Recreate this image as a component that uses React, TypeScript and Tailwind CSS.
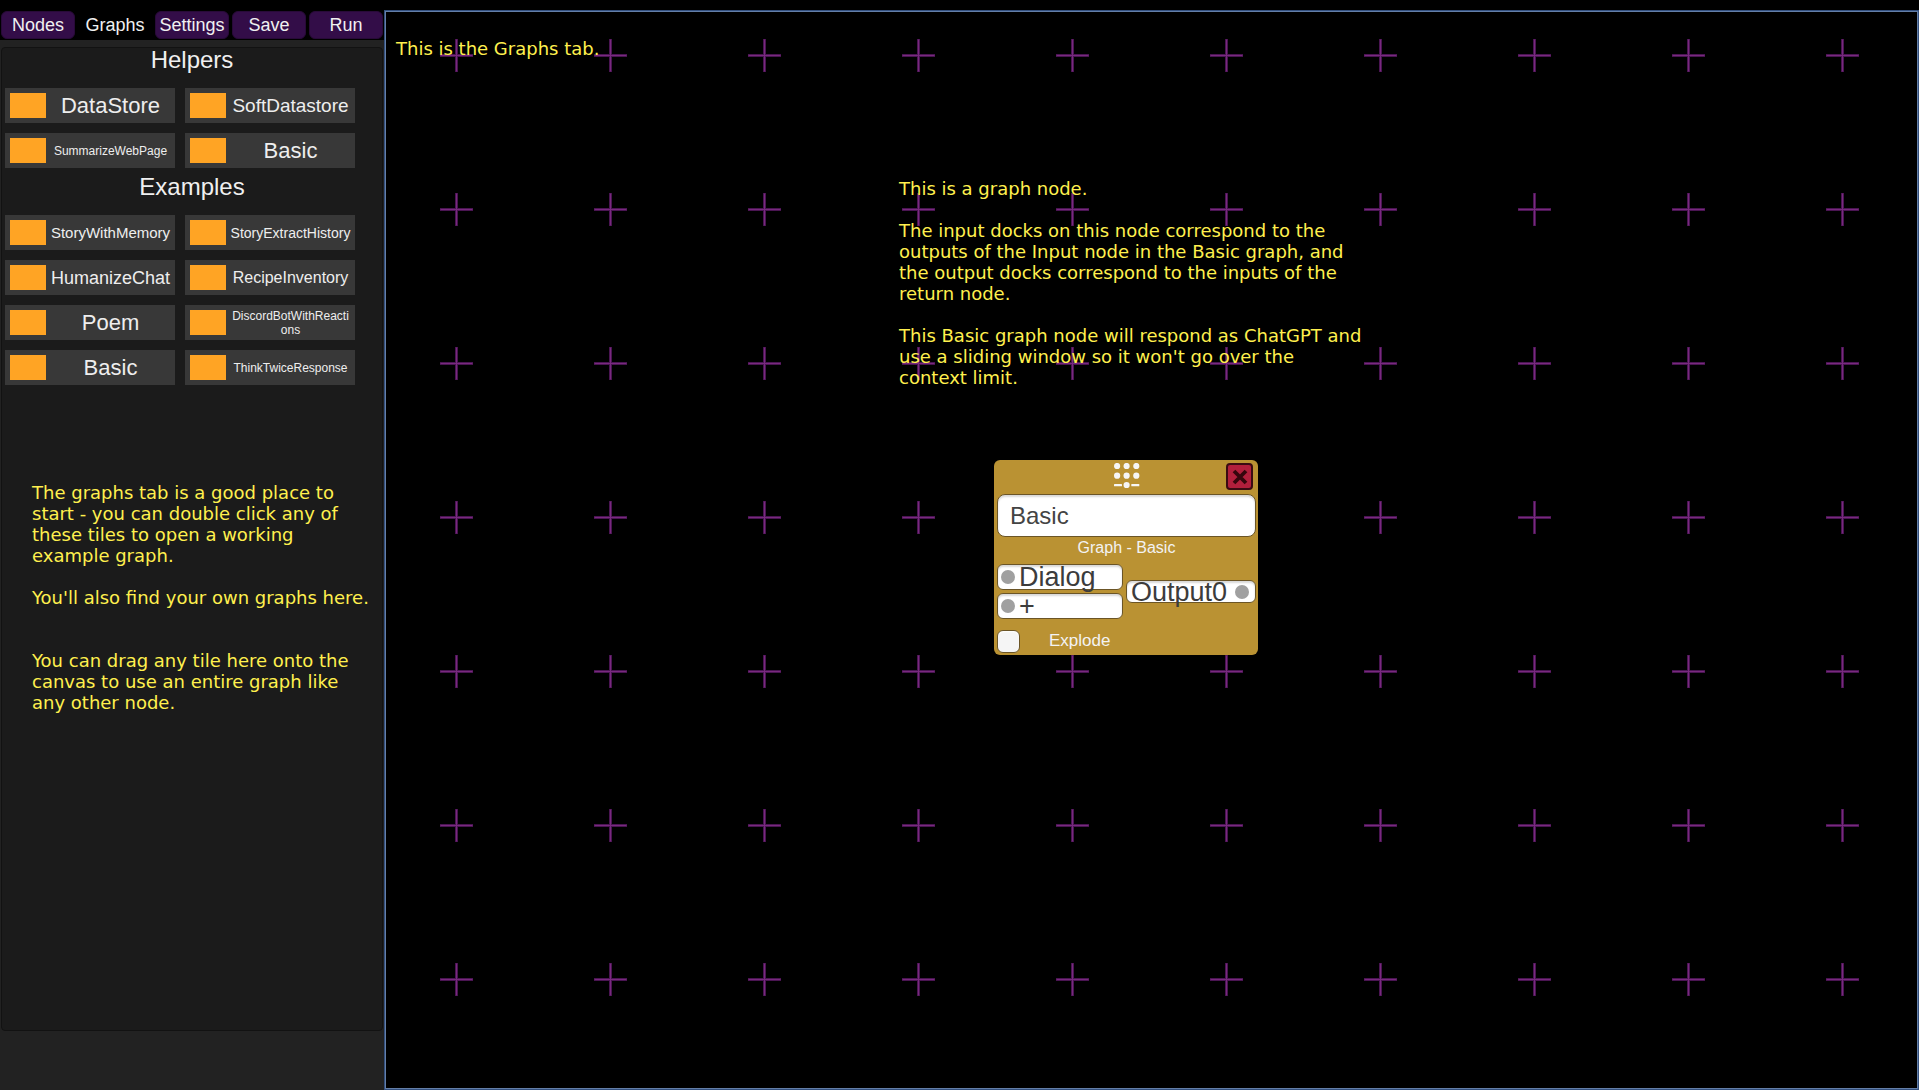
import React from "react";

type Tile = { label: string; size: string };

const helpers: Tile[] = [
  { label: "DataStore", size: "text-[22px] leading-6 whitespace-nowrap" },
  { label: "SoftDatastore", size: "text-[19px] leading-6 whitespace-nowrap" },
  { label: "SummarizeWebPage", size: "text-[12px] leading-6 whitespace-nowrap" },
  { label: "Basic", size: "text-[22px] leading-6 whitespace-nowrap" },
];

const examples: Tile[] = [
  { label: "StoryWithMemory", size: "text-[15px] leading-6 whitespace-nowrap" },
  { label: "StoryExtractHistory", size: "text-[14px] leading-6 whitespace-nowrap" },
  { label: "HumanizeChat", size: "text-[18px] leading-6 whitespace-nowrap" },
  { label: "RecipeInventory", size: "text-[16px] leading-6 whitespace-nowrap" },
  { label: "Poem", size: "text-[22px] leading-6 whitespace-nowrap" },
  { label: "DiscordBotWithReactions", size: "text-[12px] leading-[14px] break-all" },
  { label: "Basic", size: "text-[22px] leading-6 whitespace-nowrap" },
  { label: "ThinkTwiceResponse", size: "text-[12px] leading-6 whitespace-nowrap" },
];

const tabs = ["Nodes", "Graphs", "Settings", "Save", "Run"];

function TileGroup({ title, tiles }: { title: string; tiles: Tile[] }) {
  return (
    <section>
      <h2 className="h-10 text-center text-2xl leading-6">{title}</h2>
      <div className="grid grid-cols-2 gap-2.5 pl-[3px] pr-[27px]">
        {tiles.map((t) => (
          <button
            key={t.label}
            className="flex h-[35px] items-center gap-1 bg-[#383838] pl-[5px] pr-1 text-[#eeeeee]"
          >
            <span className="h-[25px] w-9 shrink-0 bg-[#ffa424]" />
            <span className={`min-w-0 flex-1 text-center ${t.size}`}>{t.label}</span>
          </button>
        ))}
      </div>
    </section>
  );
}

function Dock({ label, output }: { label: string; output?: boolean }) {
  return (
    <button
      className={`flex items-center rounded-md border border-[#6b5526] bg-white shadow-[inset_0_2px_2px_#d8d8d8] ${
        output ? "h-[23px] flex-row-reverse justify-between pl-1 pr-1.5" : "h-[26px] gap-1 pl-[3px]"
      }`}
    >
      <span className="size-3.5 shrink-0 rounded-full bg-[#a0a0a0]" />
      <span className="text-[27px] leading-6">{label}</span>
    </button>
  );
}

function GraphNode() {
  return (
    <article className="absolute left-[609px] top-[449px] w-[264px] rounded-md bg-[#ba9233] pb-0.5 pl-[3px] pr-0.5 text-[#3c3c3c]">
      <header className="grid h-[34px] grid-cols-[1fr_auto_1fr] items-start pt-[3px]">
        <svg className="col-start-2 h-[25px] w-[26px]" viewBox="0 0 26 25" fill="#f6f6f6" aria-hidden="true">
          {[3.1, 12.6, 22.3].map((x) => (
            <React.Fragment key={x}>
              <circle cx={x} cy="3" r="3.1" />
              <circle cx={x} cy="12.7" r="3.1" />
            </React.Fragment>
          ))}
          <circle cx="12.6" cy="22.1" r="3.1" />
          <rect x="0" y="21" width="8" height="2.2" rx="0.5" />
          <rect x="17.3" y="21" width="8" height="2.2" rx="0.5" />
        </svg>
        <button
          aria-label="Close"
          className="mr-[3px] flex size-[27px] items-center justify-center justify-self-end rounded border-2 border-[#3a0b12] bg-[#b21f3c]"
        >
          <svg className="size-4" viewBox="0 0 16 16" stroke="#36060d" strokeWidth="3.8" aria-hidden="true">
            <path d="M2 2 14 14M14 2 2 14" />
          </svg>
        </button>
      </header>
      <input
        aria-label="Node name"
        defaultValue="Basic"
        className="block h-[43px] w-full rounded-lg border border-[#6b5526] bg-white px-3 text-2xl text-[#444444] shadow-[inset_0_2px_2px_#d8d8d8] outline-none"
      />
      <p className="h-[27px] pt-px text-center text-base leading-5 text-[#f3f3f3]">Graph - Basic</p>
      <div className="grid grid-cols-[126px_1fr] items-center gap-[3px]">
        <div className="flex flex-col gap-[3px]">
          <Dock label="Dialog" />
          <Dock label="+" />
        </div>
        <Dock label="Output0" output />
      </div>
      <label className="mt-2.5 flex items-center gap-[29px] text-[17px] leading-6 text-[#f3f3f3]">
        <input
          type="checkbox"
          className="size-[23px] appearance-none rounded-md border border-[#6b5526] bg-[#f5f5f5] shadow-[inset_0_1px_2px_#ffffff]"
        />
        Explode
      </label>
    </article>
  );
}

const columns = Array.from({ length: 10 }, (_, i) => 72 + i * 154);
const rows = Array.from({ length: 7 }, (_, i) => 45 + i * 154);

function GridMarks() {
  return (
    <svg className="absolute inset-0 size-full" aria-hidden="true">
      {rows.map((y) =>
        columns.map((x) => (
          <g key={`${x}-${y}`} transform={`translate(${x - 0.5} ${y - 0.5})`}>
            <path d="M-16.5 0h33M0-16.5v33" stroke="#4a1552" strokeWidth="3" />
            <path d="M-16 0h32M0-16v32" stroke="#79297f" strokeWidth="1" />
          </g>
        )),
      )}
    </svg>
  );
}

const note = "font-['DejaVu_Sans',sans-serif] text-lg leading-[21px] text-[#fff04e]";

export default function App() {
  return (
    <div className="flex h-screen bg-black pt-2.5 font-['Liberation_Sans',sans-serif] text-[#f0f0f0]">
      <aside className="flex w-96 shrink-0 flex-col">
        <nav className="grid h-[30px] grid-cols-5 gap-[3px] px-px pb-px pt-px">
          {tabs.map((t) => (
            <button
              key={t}
              className={`rounded-md text-lg leading-6 ${
                t === "Graphs" ? "bg-black" : "border border-[#280a38] bg-[#330d48]"
              }`}
            >
              {t}
            </button>
          ))}
        </nav>
        <div className="flex flex-1 flex-col bg-[#222222] px-px pb-[59px] pt-[7px]">
          <div className="flex-1 rounded border border-[#121212] bg-[#1b1b1b]">
            <TileGroup title="Helpers" tiles={helpers} />
            <div className="h-[7px]" />
            <TileGroup title="Examples" tiles={examples} />
            <div className={`${note} mt-[97px] pl-[30px] pr-3`}>
              <p className="mb-[21px]">
                The graphs tab is a good place to
                <br />
                start - you can double click any of
                <br />
                these tiles to open a working
                <br />
                example graph.
              </p>
              <p className="mb-[42px] whitespace-nowrap">You'll also find your own graphs here.</p>
              <p>
                You can drag any tile here onto the
                <br />
                canvas to use an entire graph like
                <br />
                any other node.
              </p>
            </div>
          </div>
        </div>
      </aside>
      <main className="relative min-w-0 flex-1 overflow-hidden border border-[#33507f] shadow-[inset_0_0_0_1px_#647fa8]">
        <GridMarks />
        <p className={`${note} absolute left-[11px] top-[27px]`}>This is the Graphs tab.</p>
        <div className={`${note} absolute left-[514px] top-[167px] w-[470px]`}>
          <p className="mb-[21px]">This is a graph node.</p>
          <p className="mb-[21px]">
            The input docks on this node correspond to the
            <br />
            outputs of the Input node in the Basic graph, and
            <br />
            the output docks correspond to the inputs of the
            <br />
            return node.
          </p>
          <p>
            This Basic graph node will respond as ChatGPT and
            <br />
            use a sliding window so it won't go over the
            <br />
            context limit.
          </p>
        </div>
        <GraphNode />
      </main>
    </div>
  );
}
